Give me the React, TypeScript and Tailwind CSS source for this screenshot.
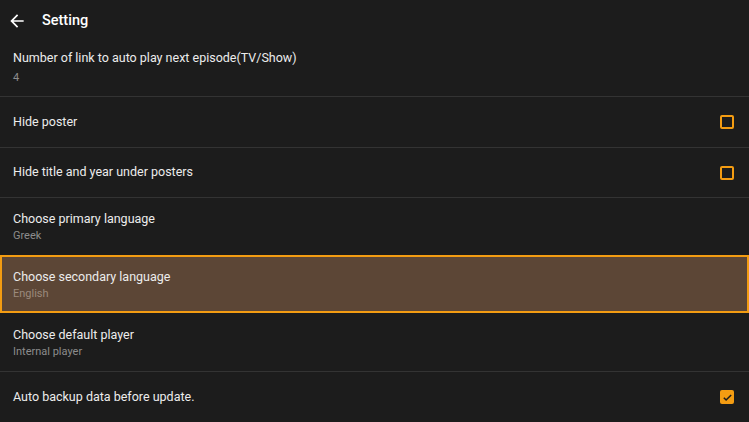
import React from "react";

const Check = ({ checked }: { checked?: boolean }) =>
  checked ? (
    <div className="w-[14px] h-[14px] rounded-[2px] bg-[#f39c12] flex items-center justify-center">
      <svg width="11" height="11" viewBox="0 0 24 24">
        <path d="M4 12.5l5 5L20 6.5" fill="none" stroke="#1c1c1c" strokeWidth="3.4" />
      </svg>
    </div>
  ) : (
    <div className="w-[14px] h-[14px] rounded-[2px] border-2 border-[#f39c12]" />
  );

export default function App() {
  const font = { fontFamily: "Roboto, 'Noto Sans', sans-serif" };
  return (
    <div className="w-[749px] h-[422px] overflow-hidden bg-[#1c1c1c] text-[#ececec]" style={font}>
      <div className="h-[40px] flex items-center pt-[1px]">
        <svg className="ml-[7px]" width="20" height="20" viewBox="0 0 24 24">
          <path d="M20 11H7.83l5.59-5.59L12 4l-8 8 8 8 1.41-1.41L7.83 13H20v-2z" fill="#ffffff" />
        </svg>
        <div className="ml-[15px] text-[14.5px] font-medium text-white">Setting</div>
      </div>

      <div className="h-[57px] border-b border-[#333333] px-[13px] flex flex-col justify-center pb-[3px]">
        <div className="text-[12.5px] leading-[17px]">Number of link to auto play next episode(TV/Show)</div>
        <div className="text-[11px] leading-[14px] mt-[5px] text-[#8c8c8c]">4</div>
      </div>

      <div className="h-[51px] border-b border-[#333333] pl-[13px] pr-[15px] flex items-center justify-between">
        <div className="text-[12.5px]">Hide poster</div>
        <Check />
      </div>

      <div className="h-[50px] border-b border-[#333333] pl-[13px] pr-[15px] flex items-center justify-between">
        <div className="text-[12.5px]">Hide title and year under posters</div>
        <Check />
      </div>

      <div className="h-[57px] px-[13px] flex flex-col justify-center">
        <div className="text-[12.5px] leading-[17px]">Choose primary language</div>
        <div className="text-[11px] leading-[14px] mt-[2px] text-[#8c8c8c]">Greek</div>
      </div>

      <div className="h-[58px] border-2 border-[#f39c12] bg-[#5c4636] px-[11px] flex flex-col justify-center">
        <div className="text-[12.5px] leading-[17px]">Choose secondary language</div>
        <div className="text-[11px] leading-[14px] mt-[2px] text-[#9b8a7c]">English</div>
      </div>

      <div className="h-[59px] border-b border-[#333333] px-[13px] flex flex-col justify-center">
        <div className="text-[12.5px] leading-[17px]">Choose default player</div>
        <div className="text-[11px] leading-[14px] mt-[2px] text-[#8c8c8c]">Internal player</div>
      </div>

      <div className="h-[50px] pl-[13px] pr-[15px] flex items-center justify-between">
        <div className="text-[12.5px]">Auto backup data before update.</div>
        <Check checked />
      </div>
    </div>
  );
}
